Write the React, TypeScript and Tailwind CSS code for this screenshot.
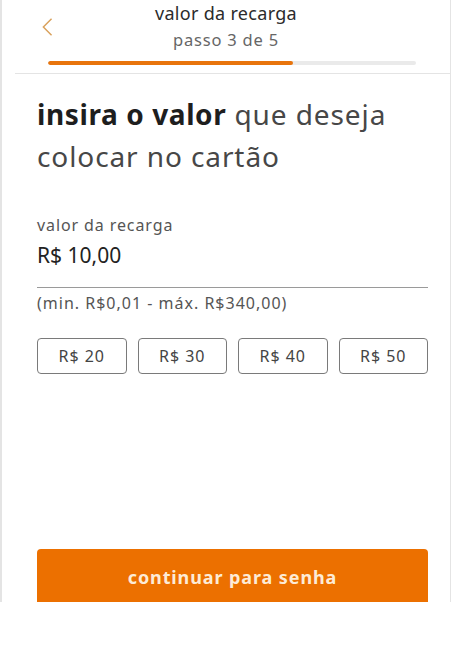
import React from "react";

export default function App() {
  const font = { fontFamily: '"Noto Sans", "Open Sans", sans-serif' };
  return (
    <div className="w-[454px] h-[655px] bg-white" style={font}>
      <div className="w-[451px] h-[602px] border-l-[2px] border-r border-[#e4e4e4] overflow-hidden flex flex-col">
        {/* header */}
        <div className="relative h-[73px] flex flex-col items-center">
          <button className="absolute left-[38px] top-[16px] w-[16px] h-[22px] text-[#d9a15c]">
            <svg viewBox="0 0 14 22" width="14" height="20" fill="none" stroke="currentColor" strokeWidth="1.6">
              <path d="M12 2 L3 11 L12 20" />
            </svg>
          </button>
          <div className="mt-[2px] text-[18px] leading-[22px] tracking-[0.3px] text-[#2b2b2b]">valor da recarga</div>
          <div className="mt-[6px] text-[16.5px] leading-[20px] tracking-[0.8px] text-[#666]">passo 3 de 5</div>
          <div className="mt-[11px] self-start ml-[46px] w-[368px] h-[4px] bg-[#eaeaea] rounded-full overflow-hidden">
            <div className="w-[245px] h-full bg-[#e8740c] rounded-full" />
          </div>
        </div>
        <div className="ml-[13px] border-b border-[#e4e4e4]" />

        {/* content */}
        <div className="pl-[35px] pr-[22px] flex flex-col">
          <h1 className="mt-[19px] text-[28px] leading-[42px] tracking-[0.9px] text-[#474747] whitespace-nowrap">
            <span className="font-bold text-[#1e1e1e] tracking-[0.6px]">insira o valor</span> que deseja
            <br />
            colocar no cartão
          </h1>

          <div className="mt-[38px] text-[16px] leading-[20px] tracking-[0.9px] text-[#555]">valor da recarga</div>
          <div className="mt-[7px] text-[21px] leading-[26px] text-[#222]">R$ 10,00</div>
          <div className="mt-[19px] border-b border-[#9a9a9a]" />
          <div className="mt-[5px] text-[16px] leading-[20px] tracking-[1px] text-[#555]">(min. R$0,01 - máx. R$340,00)</div>

          <div className="mt-[25px] grid grid-cols-4 gap-[11px]">
            {["R$ 20", "R$ 30", "R$ 40", "R$ 50"].map((v) => (
              <button
                key={v}
                className="h-[36px] rounded-[4px] border-[1.5px] border-[#7a7a7a] text-[16px] tracking-[1px] text-[#444] flex items-center justify-center"
              >
                {v}
              </button>
            ))}
          </div>
        </div>

        <div className="flex-1" />
        <div className="pl-[35px] pr-[22px] mb-[-5px]">
          <button className="w-full h-[58px] rounded-[4px] bg-[#ec7000] text-[#fdebd6] font-bold text-[18px] leading-[24px] tracking-[0.9px] flex items-start justify-center pt-[16px]">
            continuar para senha
          </button>
        </div>
      </div>
    </div>
  );
}
